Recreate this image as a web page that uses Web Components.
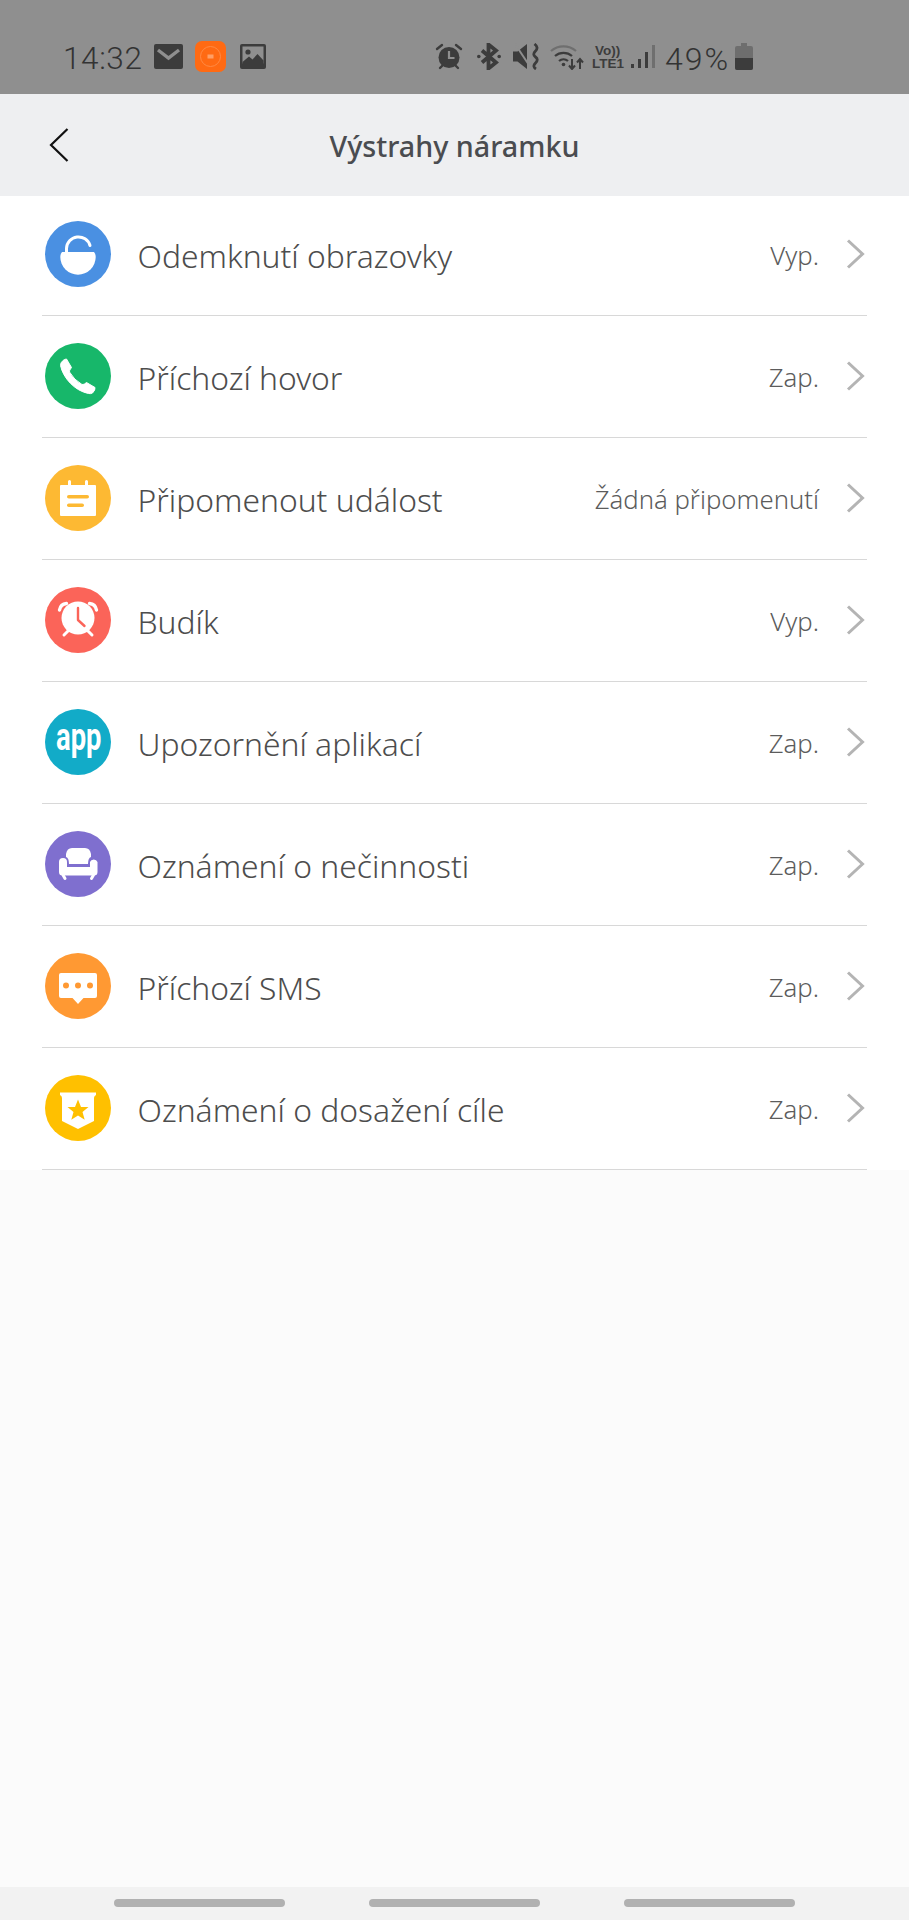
<!DOCTYPE html>
<html lang="cs">
<head>
<meta charset="utf-8">
<title>Výstrahy náramku</title>
<style>
  html, body { margin: 0; padding: 0; }
  body {
    width: 909px;
    height: 1920px;
    display: flex;
    flex-direction: column;
    background: #fbfbfb;
    font-family: "Noto Sans", sans-serif;
    overflow: hidden;
  }
</style>
</head>
<body>
  <status-bar></status-bar>
  <app-header>Výstrahy náramku</app-header>
  <alert-list>
    <alert-row first icon="lock" value="Vyp.">Odemknutí obrazovky</alert-row>
    <alert-row icon="phone" value="Zap.">Příchozí hovor</alert-row>
    <alert-row icon="event" value="Žádná připomenutí">Připomenout událost</alert-row>
    <alert-row icon="alarm" value="Vyp.">Budík</alert-row>
    <alert-row icon="app" value="Zap.">Upozornění aplikací</alert-row>
    <alert-row icon="sofa" value="Zap.">Oznámení o nečinnosti</alert-row>
    <alert-row icon="sms" value="Zap.">Příchozí SMS</alert-row>
    <alert-row icon="goal" value="Zap.">Oznámení o dosažení cíle</alert-row>
  </alert-list>
  <nav-bar></nav-bar>

<script>
// round icons of the alert list, all on a 66x66 canvas
const ROW_ICONS = {
  lock: `<circle cx="33" cy="33" r="33" fill="#4a90e2"/>
    <path d="M17 31H49Q50.7 33 50.7 36A17.7 17.7 0 0 1 15.3 36Q15.3 33 17 31Z" fill="#fff"/>
    <path d="M21.5 31V27.5A12 12 0 0 1 45 24.5" fill="none" stroke="#fff" stroke-width="3" stroke-linecap="round"/>`,
  phone: `<circle cx="33" cy="33" r="33" fill="#17b76a"/>
    <path d="M21.5 16L26.5 24.500Q24 27.500 24.500 29Q29 37 37 41.500Q39 42 41.500 39.500L50 44.500Q50.500 47 47.500 50Q45.500 51 43.500 50.500C30 48 18 35 15.500 22.500Q15.500 19.500 18 17.500Q20 16 21.500 16Z" fill="#fff" stroke="#fff" stroke-width="1" stroke-linejoin="round"/>`,
  event: `<circle cx="33" cy="33" r="33" fill="#fdb933"/>
    <path d="M16 20H23V16.5A1.5 1.5 0 0 1 26 16.5V20H40V16.5A1.5 1.5 0 0 1 43 16.5V20H50Q51 20 51 21V50Q51 51 50 51H16Q15 51 15 50V21Q15 20 16 20Z" fill="#fff"/>
    <rect x="22" y="30" width="22" height="3.6" rx="1.8" fill="#fdb933"/>
    <rect x="22" y="38.4" width="17" height="3.6" rx="1.8" fill="#fdb933"/>`,
  alarm: `<circle cx="33" cy="33" r="33" fill="#fb6459"/>
    <circle cx="33" cy="31" r="16.5" fill="#fff"/>
    <path d="M14.5 23A8 8 0 0 1 21.5 16.5M51.5 23A8 8 0 0 0 44.5 16.5" fill="none" stroke="#fff" stroke-width="3.4" stroke-linecap="round"/>
    <path d="M19 48L24 43M47 48L42 43" fill="none" stroke="#fff" stroke-width="3" stroke-linecap="round"/>
    <path d="M33 21V33L39.5 39" fill="none" stroke="#fb6459" stroke-width="2.4" stroke-linecap="round" stroke-linejoin="round"/>`,
  app: `<circle cx="33" cy="33" r="33" fill="#12abc8"/>
    <text transform="translate(11 41) scale(.72 1)" font-family="Roboto, sans-serif" font-weight="700" font-size="38" fill="#fff">app</text>`,
  sofa: `<circle cx="33" cy="33" r="33" fill="#7f6fcf"/>
    <path d="M27 17H40Q45 17 46 23V26Q43 27 43 33H24Q24 27 21 26V23Q22 17 27 17Z" fill="#fff"/>
    <path d="M18 27A4 4 0 0 1 22 31V36H45V31A4 4 0 0 1 52.500 31V41Q52.500 44.500 49 44.500H17.500Q14 44.500 14 41V31A4 4 0 0 1 18 27Z" fill="#fff"/>
    <path d="M18 44L20 47.500M48.500 44L46.500 47.500" fill="none" stroke="#fff" stroke-width="3" stroke-linecap="round"/>`,
  sms: `<circle cx="33" cy="33" r="33" fill="#ff9933"/>
    <path d="M16 20H50Q52 20 52 22V43Q52 45 50 45H38.5L33 51L27.5 45H16Q14 45 14 43V22Q14 20 16 20Z" fill="#fff"/>
    <circle cx="21" cy="32.5" r="3" fill="#ff9933"/>
    <circle cx="33" cy="32.5" r="3" fill="#ff9933"/>
    <circle cx="45" cy="32.5" r="3" fill="#ff9933"/>`,
  goal: `<circle cx="33" cy="33" r="33" fill="#ffc000"/>
    <path d="M15 17.5H51V20Q49 21 49 23V46L33 54L17 46V23Q17 21 15 20Z" fill="#fff"/>
    <path d="M33 24.5L36 32H43.5L37.5 37L39.7 44.8L33 40.4L26.3 44.8L28.5 37L22.5 32H30Z" fill="#ffc000"/>`
};

class StatusBar extends HTMLElement {
  constructor() {
    super();
    this.attachShadow({ mode: 'open' });
  }

  connectedCallback() {
    this.shadowRoot.innerHTML = `
      <style>
        :host {
          display: flex;
          flex: none;
          box-sizing: border-box;
          height: 94px;
          padding: 41px 0 0 63px;
          background: #8f8f8f;
          color: #333;
          font-family: Roboto, sans-serif;
          font-weight: 300;
        }
        svg { display: block; flex: none; }
        .left, .right { display: flex; align-items: flex-start; }
        .left { width: 372px; }
        .time { font-size: 31.500px; line-height: 36px; width: 91px; letter-spacing: .6px; }
        .pct { font-size: 32px; line-height: 36px; margin: 0 5px 0 10px; letter-spacing: 2px; }
        .volte { width: 34px; margin-left: 7px; color: #3c3c3c; font: 700 13.5px/13px "Liberation Sans", sans-serif; }
        .volte span { display: block; }
        .volte .vo { padding-left: 3px; margin-top: 3px; }
      </style>
      <div class="left">
        <span class="time">14:32</span>
        <svg width="29" height="25" style="margin-top:3px" viewBox="0 0 29 25">
          <rect width="29" height="25" rx="2" fill="#3c3c3c"/>
          <path d="M4 6L14.5 14L25 6" fill="none" stroke="#8f8f8f" stroke-width="3.4"/>
        </svg>
        <svg width="31" height="31" style="margin-left:12px" viewBox="0 0 31 31">
          <rect width="31" height="31" rx="7" fill="#ff6a13"/>
          <circle cx="15.5" cy="15.5" r="10" fill="none" stroke="#ff8a44" stroke-width="1"/>
          <rect x="12.5" y="13.5" width="6" height="4" fill="#ff9f66"/>
        </svg>
        <svg width="26" height="25" style="margin:3px 0 0 14px" viewBox="0 0 26 25">
          <rect width="26" height="25" rx="2" fill="#3c3c3c"/>
          <rect x="2.5" y="2.5" width="21" height="17" fill="#8f8f8f"/>
          <circle cx="8" cy="8" r="2.6" fill="#3c3c3c"/>
          <path d="M2.5 18L9 12.5L12.5 15.5L17.5 10L23.5 16.5V20H2.5Z" fill="#3c3c3c"/>
        </svg>
      </div>
      <div class="right">
        <svg width="28" height="27" style="margin-top:2px" viewBox="0 0 28 27">
          <circle cx="14" cy="14.5" r="10.5" fill="#3c3c3c"/>
          <path d="M14 8V15H19.5" fill="none" stroke="#8f8f8f" stroke-width="2.2"/>
          <path d="M2 6L7 2M26 6L21 2M5 25L7.5 22.5M23 25L20.5 22.5" fill="none" stroke="#3c3c3c" stroke-width="2.4" stroke-linecap="round"/>
        </svg>
        <svg width="24" height="27" style="margin:2px 0 0 14px" viewBox="0 0 24 27">
          <path d="M5 7.5L19 19.500L11.5 25.500V1.500L19 7.500L5 19.5" fill="none" stroke="#3c3c3c" stroke-width="3.800"/>
          <circle cx="1.800" cy="13.5" r="1.800" fill="#3c3c3c"/>
          <circle cx="22.200" cy="13.5" r="1.800" fill="#3c3c3c"/>
        </svg>
        <svg width="27" height="27" style="margin:2px 0 0 12px" viewBox="0 0 27 27">
          <path d="M0 8.500H4.500L14 1V26L4.500 18.500H0Z" fill="#3c3c3c"/>
          <path d="M2 1L18 25" stroke="#8f8f8f" stroke-width="2"/>
          <path d="M21.500 1Q26 4.500 22.500 8T22.500 14T22.500 20T23 26" fill="none" stroke="#3c3c3c" stroke-width="2.800"/>
        </svg>
        <svg width="35" height="28" style="margin:1px 0 0 10px" viewBox="0 0 35 28">
          <path d="M1 9A19 19 0 0 1 26 9" fill="none" stroke="#6f6f6f" stroke-width="2.2"/>
          <path d="M5 14A13 13 0 0 1 22 14M9 19A7 7 0 0 1 18 19" fill="none" stroke="#3c3c3c" stroke-width="2.2"/>
          <circle cx="13.500" cy="22.500" r="1.800" fill="#3c3c3c"/>
          <path d="M22 17V27M19 23.500L22 27L25 23.500M30 27V17M27 20.500L30 17L33 20.500" fill="none" stroke="#3c3c3c" stroke-width="2"/>
        </svg>
        <div class="volte"><span class="vo">Vo))</span><span>LTE1</span></div>
        <svg width="24" height="26" style="margin:3px 0 0 5px" viewBox="0 0 24 26">
          <rect x="0" y="20" width="3" height="4" fill="#3c3c3c"/>
          <rect x="7" y="15" width="3" height="9" fill="#3c3c3c"/>
          <rect x="14" y="8" width="3" height="16" fill="#3c3c3c"/>
          <rect x="21" y="1" width="3" height="23" fill="#6f6f6f"/>
        </svg>
        <span class="pct">49%</span>
        <svg width="18" height="27" style="margin-top:2px" viewBox="0 0 18 27">
          <path d="M6 0H12V3H16Q18 3 18 5V25Q18 27 16 27H2Q0 27 0 25V5Q0 3 2 3H6Z" fill="#6e6e6e"/>
          <path d="M0 15H18V25Q18 27 16 27H2Q0 27 0 25Z" fill="#3c3c3c"/>
        </svg>
      </div>`;
  }
}

class AppHeader extends HTMLElement {
  constructor() {
    super();
    this.attachShadow({ mode: 'open' });
  }

  connectedCallback() {
    this.shadowRoot.innerHTML = `
      <style>
        :host {
          display: flex;
          flex: none;
          align-items: center;
          justify-content: center;
          position: relative;
          height: 102px;
          background: #eeeff1;
          color: #4a4c50;
          font: 500 28.700px "Noto Sans", sans-serif;
        }
        button {
          position: absolute;
          left: 49px;
          top: 34px;
          padding: 0;
          border: 0;
          background: none;
        }
        svg { display: block; }
      </style>
      <button aria-label="Zpět">
        <svg width="20" height="34" viewBox="0 0 20 34">
          <path d="M18.500 1L2 17L18.500 33" fill="none" stroke="#111" stroke-width="2.200"/>
        </svg>
      </button>
      <slot></slot>`;
  }
}

class AlertList extends HTMLElement {
  constructor() {
    super();
    this.attachShadow({ mode: 'open' });
    this.shadowRoot.innerHTML = `
      <style>
        :host { display: block; flex: none; background: #fff; }
      </style>
      <slot></slot>`;
  }
}

class AlertRow extends HTMLElement {
  constructor() {
    super();
    this.attachShadow({ mode: 'open' });
  }

  connectedCallback() {
    const icon = ROW_ICONS[this.getAttribute('icon')] || '';
    const value = this.getAttribute('value') || '';
    this.shadowRoot.innerHTML = `
      <style>
        :host { display: block; margin: 0 42px; }
        .row {
          display: flex;
          align-items: center;
          box-sizing: border-box;
          height: 122px;
          padding: 0 2px 2px 2.500px;
          border-bottom: 1px solid #d8d8d8;
        }
        :host([first]) .row { height: 120px; padding-bottom: 4px; }
        svg { display: block; flex: none; }
        .label {
          flex: 1;
          margin-left: 27px;
          padding-top: 4px;
          color: #4d4d4d;
          font-size: 31.800px;
          font-weight: 300;
          white-space: nowrap;
        }
        .value { padding-top: 4px; color: #5c5c5c; font-size: 25.700px; font-weight: 300; white-space: nowrap; }
        .chevron { margin-left: 27px; }
      </style>
      <div class="row">
        <svg width="66" height="66" viewBox="0 0 66 66">${icon}</svg>
        <span class="label"><slot></slot></span>
        <span class="value">${value}</span>
        <svg class="chevron" width="19" height="30" viewBox="0 0 19 30">
          <path d="M2 1.500L16.500 15L2 28.500" fill="none" stroke="#b4b4b4" stroke-width="3"/>
        </svg>
      </div>`;
  }
}

class NavBar extends HTMLElement {
  constructor() {
    super();
    this.attachShadow({ mode: 'open' });
    this.shadowRoot.innerHTML = `
      <style>
        :host {
          display: flex;
          flex: none;
          justify-content: center;
          gap: 84px;
          box-sizing: border-box;
          height: 33px;
          margin-top: auto;
          padding-top: 12px;
          background: #f2f2f2;
        }
        i { display: block; width: 171px; height: 8px; border-radius: 4px; background: #b1b1b1; }
      </style>
      <i></i><i></i><i></i>`;
  }
}

customElements.define('status-bar', StatusBar);
customElements.define('app-header', AppHeader);
customElements.define('alert-list', AlertList);
customElements.define('alert-row', AlertRow);
customElements.define('nav-bar', NavBar);
</script>
</body>
</html>
